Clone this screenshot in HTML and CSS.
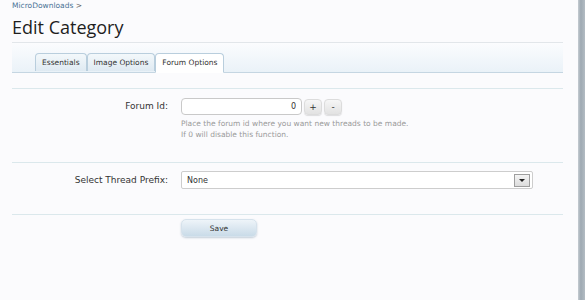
FILE: index.html
```html
<!DOCTYPE html>
<html>
<head>
<meta charset="utf-8">
<link rel="stylesheet" href="styles.css">
</head>
<body>
<div class="page">
  <main class="content">
    <nav class="crumbs"><a href="#">MicroDownloads</a> &gt;</nav>
    <h1 class="title">Edit Category</h1>
    <div class="tabbar">
      <ul class="tabs">
        <li class="tab">Essentials</li>
        <li class="tab">Image Options</li>
        <li class="tab active">Forum Options</li>
      </ul>
    </div>
    <form class="form">
      <div class="section">
        <div class="row">
          <label class="label">Forum Id:</label>
          <div class="ctrl">
            <div class="spin">
              <input class="textbox num" type="text" value="0">
              <button type="button" class="spinbtn">+</button>
              <button type="button" class="spinbtn">-</button>
            </div>
            <p class="hint">Place the forum id where you want new threads to be made.<br>If 0 will disable this function.</p>
          </div>
        </div>
      </div>
      <div class="section sel-section">
        <div class="row">
          <label class="label">Select Thread Prefix:</label>
          <div class="ctrl">
            <div class="select"><span>None</span><span class="arrow"></span></div>
          </div>
        </div>
      </div>
      <div class="section submit">
        <div class="row">
          <span class="label"></span>
          <div class="ctrl"><button type="button" class="save">Save</button></div>
        </div>
      </div>
    </form>
  </main>
  <aside class="edge"></aside>
</div>
</body>
</html>
```
FILE: styles.css
```css
html, body {
  margin: 0;
  padding: 0;
  height: 100%;
  background: #fbfbfd;
}
body {
  font-family: "DejaVu Sans", Verdana, sans-serif;
  color: #333;
}
.page {
  display: flex;
  height: 300px;
}
.content {
  flex: 0 0 551px;
  margin-left: 12px;
}
.edge {
  margin-left: auto;
  width: 7px;
  background: linear-gradient(to right, #c5ccd2, #9ea9b2 40%, #b3bcc3);
}
.crumbs {
  font-size: 7.5px;
  height: 12px;
  line-height: 12px;
  color: #666;
}
.crumbs a {
  color: #4a7396;
  text-decoration: none;
}
.title {
  margin: 0;
  font-family: "Open Sans", sans-serif;
  font-weight: 400;
  font-size: 18px;
  line-height: 30px;
  color: #1e1e1e;
  border-bottom: 1px solid #e2e6ea;
}
.tabbar {
  height: 29px;
  background: linear-gradient(to bottom, #fbfcfe, #eaf2f8);
  border-bottom: 1px solid #c5d6e2;
  display: flex;
  align-items: flex-end;
  padding-left: 23px;
}
.tabs {
  display: flex;
  margin: 0 0 -1px 0;
  padding: 0;
  list-style: none;
  gap: 0;
}
.tab {
  font-size: 7.5px;
  height: 17px;
  line-height: 17px;
  padding: 0 6px;
  border: 1px solid #b9cedd;
  border-bottom: none;
  border-radius: 4px 4px 0 0;
  background: linear-gradient(to bottom, #f3f8fb, #dfeaf2);
  color: #333;
}
.tab.active {
  background: #fff;
  height: 18px;
  line-height: 18px;
  border-bottom: 1px solid #fff;
}
.form {
  margin-top: 15px;
}
.section {
  border-top: 1px solid #dbe8ec;
}
.row {
  display: flex;
}
.label {
  flex: 0 0 156px;
  text-align: right;
  font-size: 9px;
  color: #333;
}
.ctrl {
  margin-left: 13px;
  flex: 1;
}
.section:first-child .row {
  padding: 9px 0 22px;
}
.section:first-child .label {
  line-height: 17px;
}
.spin {
  display: flex;
  align-items: center;
  gap: 2px;
}
.textbox {
  box-sizing: border-box;
  width: 121px;
  height: 17px;
  border: 1px solid #c9c9c9;
  border-radius: 4px;
  background: #fff;
  font: 8px "DejaVu Sans", sans-serif;
  color: #333;
  padding: 0 5px;
  margin: 0;
}
.textbox.num {
  text-align: right;
}
.spinbtn {
  box-sizing: border-box;
  width: 18px;
  height: 16px;
  padding: 0;
  margin: 0;
  border: 1px solid #dcdcdc;
  border-radius: 4px;
  background: linear-gradient(to bottom, #f6f6f6, #e2e2e2);
  box-shadow: 0 1px 1px rgba(0,0,0,0.12);
  font: 9px "DejaVu Sans", sans-serif;
  color: #333;
}
.hint {
  margin: 3px 0 0;
  font-size: 7.5px;
  line-height: 11px;
  color: #9a9a9a;
}
.sel-section .row {
  padding: 8px 0 25px;
}
.sel-section .label {
  line-height: 18px;
}
.select {
  box-sizing: border-box;
  width: 352px;
  height: 18px;
  border: 1px solid #cdcdcd;
  border-radius: 2px;
  background: #fff;
  display: flex;
  align-items: center;
  justify-content: space-between;
  padding: 0 2px 0 5px;
  font-size: 8px;
  color: #333;
}
.arrow {
  box-sizing: border-box;
  width: 16px;
  height: 13px;
  border: 1px solid #9e9e9e;
  background: linear-gradient(to bottom, #f4f4f4, #dcdcdc);
  position: relative;
}
.arrow::after {
  content: "";
  position: absolute;
  left: 4px;
  top: 4px;
  border-left: 3px solid transparent;
  border-right: 3px solid transparent;
  border-top: 3px solid #222;
}
.submit .row {
  padding-top: 4px;
}
.submit .ctrl {
  display: flex;
}
.save {
  box-sizing: border-box;
  width: 76px;
  height: 18px;
  border: 1px solid #d6e2ec;
  border-radius: 5px;
  background: linear-gradient(to bottom, #eef4f9, #c9dbe8);
  box-shadow: 0 1px 2px rgba(90,120,150,0.35);
  font: 7.5px "DejaVu Sans", sans-serif;
  color: #333;
  padding: 0;
}
```
